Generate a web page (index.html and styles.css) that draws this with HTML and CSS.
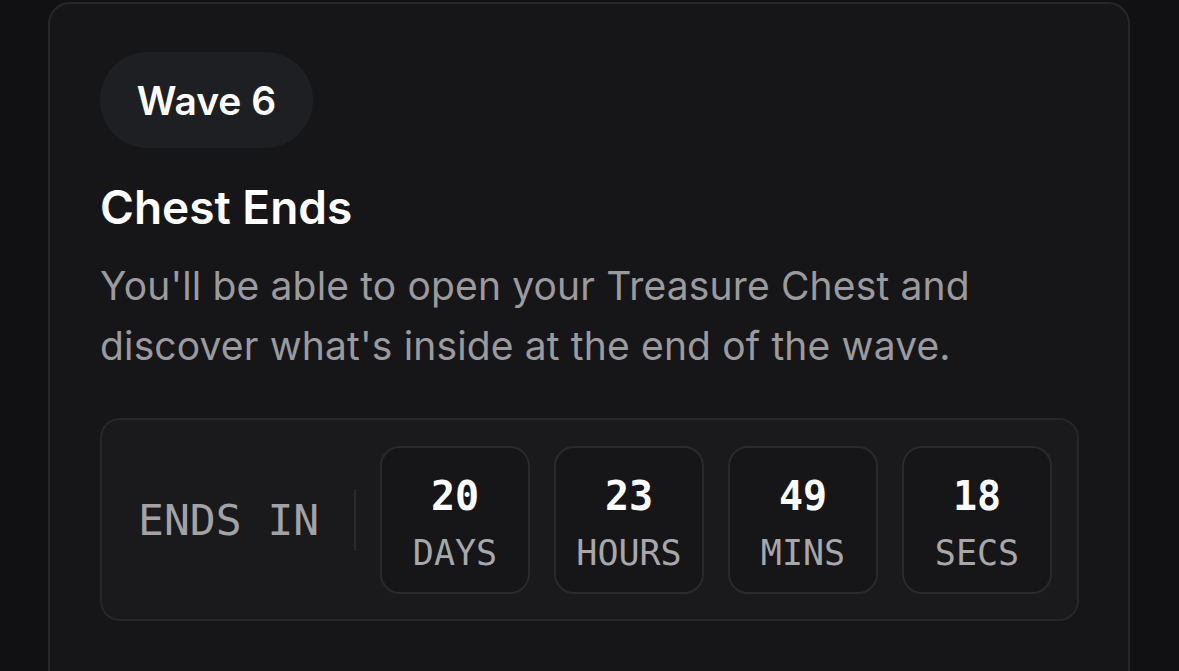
FILE: index.html
```html
<!DOCTYPE html>
<html>
<head>
<meta charset="utf-8">
<link rel="stylesheet" href="styles.css">
</head>
<body>
<div class="card">
  <div class="pill">Wave 6</div>
  <h2 class="title">Chest Ends</h2>
  <p class="desc">You'll be able to open your Treasure Chest and discover what's inside at the end of the wave.</p>
  <div class="countdown">
    <div class="ends">ENDS IN</div>
    <div class="divider"></div>
    <div class="units">
      <div class="unit"><span class="num">20</span><span class="lbl">DAYS</span></div>
      <div class="unit"><span class="num">23</span><span class="lbl">HOURS</span></div>
      <div class="unit"><span class="num">49</span><span class="lbl">MINS</span></div>
      <div class="unit"><span class="num">18</span><span class="lbl">SECS</span></div>
    </div>
  </div>
</div>
</body>
</html>
```
FILE: styles.css
```css
html, body {
  margin: 0;
  padding: 0;
  background: #111113;
  height: 100%;
  overflow: hidden;
}
body {
  font-family: Inter, "Noto Sans", sans-serif;
}
.card {
  margin: 2px 0 0 48px;
  width: 1082px;
  height: 720px;
  box-sizing: border-box;
  background: #161618;
  border: 2px solid #27272b;
  border-radius: 22px;
  padding: 48px 50px;
}
.pill {
  display: inline-flex;
  align-items: center;
  justify-content: center;
  height: 96px;
  width: 213px;
  border-radius: 48px;
  background: #1e1f22;
  color: #fff;
  font-size: 39px;
  font-weight: 600;
}
.title {
  margin: 31px 0 0;
  color: #fff;
  font-size: 46px;
  font-weight: 600;
  line-height: 56px;
}
.desc {
  margin: 21px 0 0;
  color: #9b9b9f;
  font-size: 39px;
  line-height: 60px;
  letter-spacing: 0.15px;
  width: 930px;
}
.countdown {
  margin-top: 42px;
  width: 979px;
  height: 203px;
  box-sizing: border-box;
  border: 2px solid #27272b;
  border-radius: 20px;
  background: #1a1a1d;
  display: flex;
  align-items: center;
  padding: 0 24px 0 36px;
  font-family: "DejaVu Sans Mono", "Liberation Mono", monospace;
}
.ends {
  color: #a3a3a6;
  font-size: 43px;
  width: 180px;
  white-space: nowrap;
}
.divider {
  width: 2px;
  height: 62px;
  background: #2a2a2e;
  margin: 0 24px 0 36px;
}
.units {
  display: flex;
  gap: 24px;
}
.unit {
  width: 150px;
  height: 148px;
  box-sizing: border-box;
  border: 2px solid #2a2a2e;
  border-radius: 20px;
  background: #161618;
  display: flex;
  flex-direction: column;
  align-items: center;
  padding-top: 28px;
}
.num {
  color: #fff;
  font-size: 40px;
  font-weight: 700;
  line-height: 40px;
  margin-bottom: 20px;
}
.lbl {
  color: #a8a8ab;
  font-size: 35px;
  line-height: 35px;
}
```
